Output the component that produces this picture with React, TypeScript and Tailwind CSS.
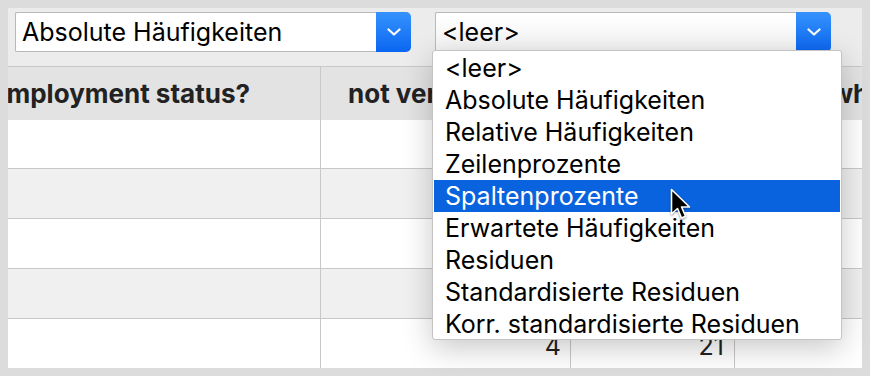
import React from "react";

const items = [
  "<leer>",
  "Absolute Häufigkeiten",
  "Relative Häufigkeiten",
  "Zeilenprozente",
  "Spaltenprozente",
  "Erwartete Häufigkeiten",
  "Residuen",
  "Standardisierte Residuen",
  "Korr. standardisierte Residuen",
];

function Chevron() {
  return (
    <svg width="14" height="8" viewBox="0 0 14 8" fill="none">
      <path d="M1.5 1.5 L7 6.5 L12.5 1.5" stroke="white" strokeWidth="2.2" strokeLinecap="round" strokeLinejoin="round" />
    </svg>
  );
}

function Select({ label, active }: { label: string; active?: boolean }) {
  return (
    <div className="flex h-[40px] w-[396px]">
      <div
        className={
          "flex flex-1 items-center rounded-l-[2px] border border-r-0 border-[#b9b9b9] pl-[6px] text-[25px] leading-none text-black " +
          (active ? "bg-gradient-to-b from-white to-[#f3f3f3]" : "bg-white")
        }
      >
        {label}
      </div>
      <div className="flex w-[35px] items-center justify-center rounded-r-[5px] bg-gradient-to-b from-[#3592fc] to-[#0a66f1]">
        <Chevron />
      </div>
    </div>
  );
}

function Cursor() {
  return (
    <svg width="24" height="34" viewBox="0 0 24 34" className="drop-shadow-[0_1px_1px_rgba(0,0,0,0.4)]">
      <path
        d="M1.5 1.5 L1.5 26 L7.5 20.5 L11.5 30 L15.5 28.3 L11.6 19 L19.5 19 Z"
        fill="black"
        stroke="white"
        strokeWidth="1.6"
        strokeLinejoin="round"
      />
    </svg>
  );
}

const rowBg = ["bg-white", "bg-[#f0f0f0]", "bg-white", "bg-[#f0f0f0]", "bg-white"];
const rowH = ["h-[49px]", "h-[50px]", "h-[50px]", "h-[50px]", "h-[50px]"];
const c1 = ["", "", "", "", "4"];
const c2 = ["", "", "", "", "21"];

export default function App() {
  return (
    <div
      className="relative h-[376px] w-[870px] overflow-hidden bg-[#dcdcdc] p-[8px]"
      style={{ fontFamily: "Inter, 'Liberation Sans', sans-serif" }}
    >
      <div className="flex h-[360px] flex-col overflow-hidden bg-[#ececec]">
        <div className="flex h-[58px] shrink-0 gap-[24px] pl-[7px] pt-[4px]">
          <Select label="Absolute Häufigkeiten" />
          <Select label="<leer>" active />
        </div>
        <div className="flex-1 overflow-hidden border-t border-[#c8c8c8] bg-white text-[#222]">
          <div className="flex h-[53px] bg-[#e3e3e3] text-[26px] font-bold">
            <div className="flex w-[313px] shrink-0 items-center justify-end overflow-hidden border-r border-[#c8c8c8] pr-[70px]">
              <span className="shrink-0 whitespace-nowrap">Employment status?</span>
            </div>
            <div className="flex w-[250px] shrink-0 items-center overflow-hidden border-r border-[#c8c8c8] pl-[27px]">
              <span className="w-[84px] overflow-hidden whitespace-nowrap">not very likely</span>
            </div>
            <div className="w-[164px] shrink-0 border-r border-[#c8c8c8]" />
            <div className="flex flex-1 items-center overflow-hidden pl-[96px]">
              <span className="shrink-0 whitespace-nowrap">wh</span>
            </div>
          </div>
          {rowBg.map((bg, i) => (
            <div key={i} className={"flex border-b border-[#c8c8c8] text-[25px] text-[#222] " + bg + " " + rowH[i]}>
              <div className="w-[313px] shrink-0 border-r border-[#c8c8c8]" />
              <div className="flex w-[250px] shrink-0 items-center justify-end border-r border-[#c8c8c8] pr-[9px] pt-[6px] leading-none">
                {c1[i]}
              </div>
              <div className="flex w-[164px] shrink-0 items-center justify-end border-r border-[#c8c8c8] pr-[10px] pt-[6px] leading-none">
                {c2[i]}
              </div>
              <div className="flex-1" />
            </div>
          ))}
        </div>
      </div>

      <div className="absolute left-[432px] top-[50px] h-[290px] w-[410px] rounded-[3px] border border-[#c4c4c4] bg-white px-px py-[1px] text-[25px] text-black shadow-[0_8px_30px_rgba(0,0,0,0.22)]">
        {items.map((it, i) => (
          <div
            key={i}
            className={
              "flex h-[32px] items-center whitespace-nowrap pl-[11px] leading-none " +
              (i === 4 ? "bg-[#0a63de] text-white" : "")
            }
          >
            {it}
          </div>
        ))}
      </div>

      <div className="absolute left-[670px] top-[188px]">
        <Cursor />
      </div>
    </div>
  );
}
